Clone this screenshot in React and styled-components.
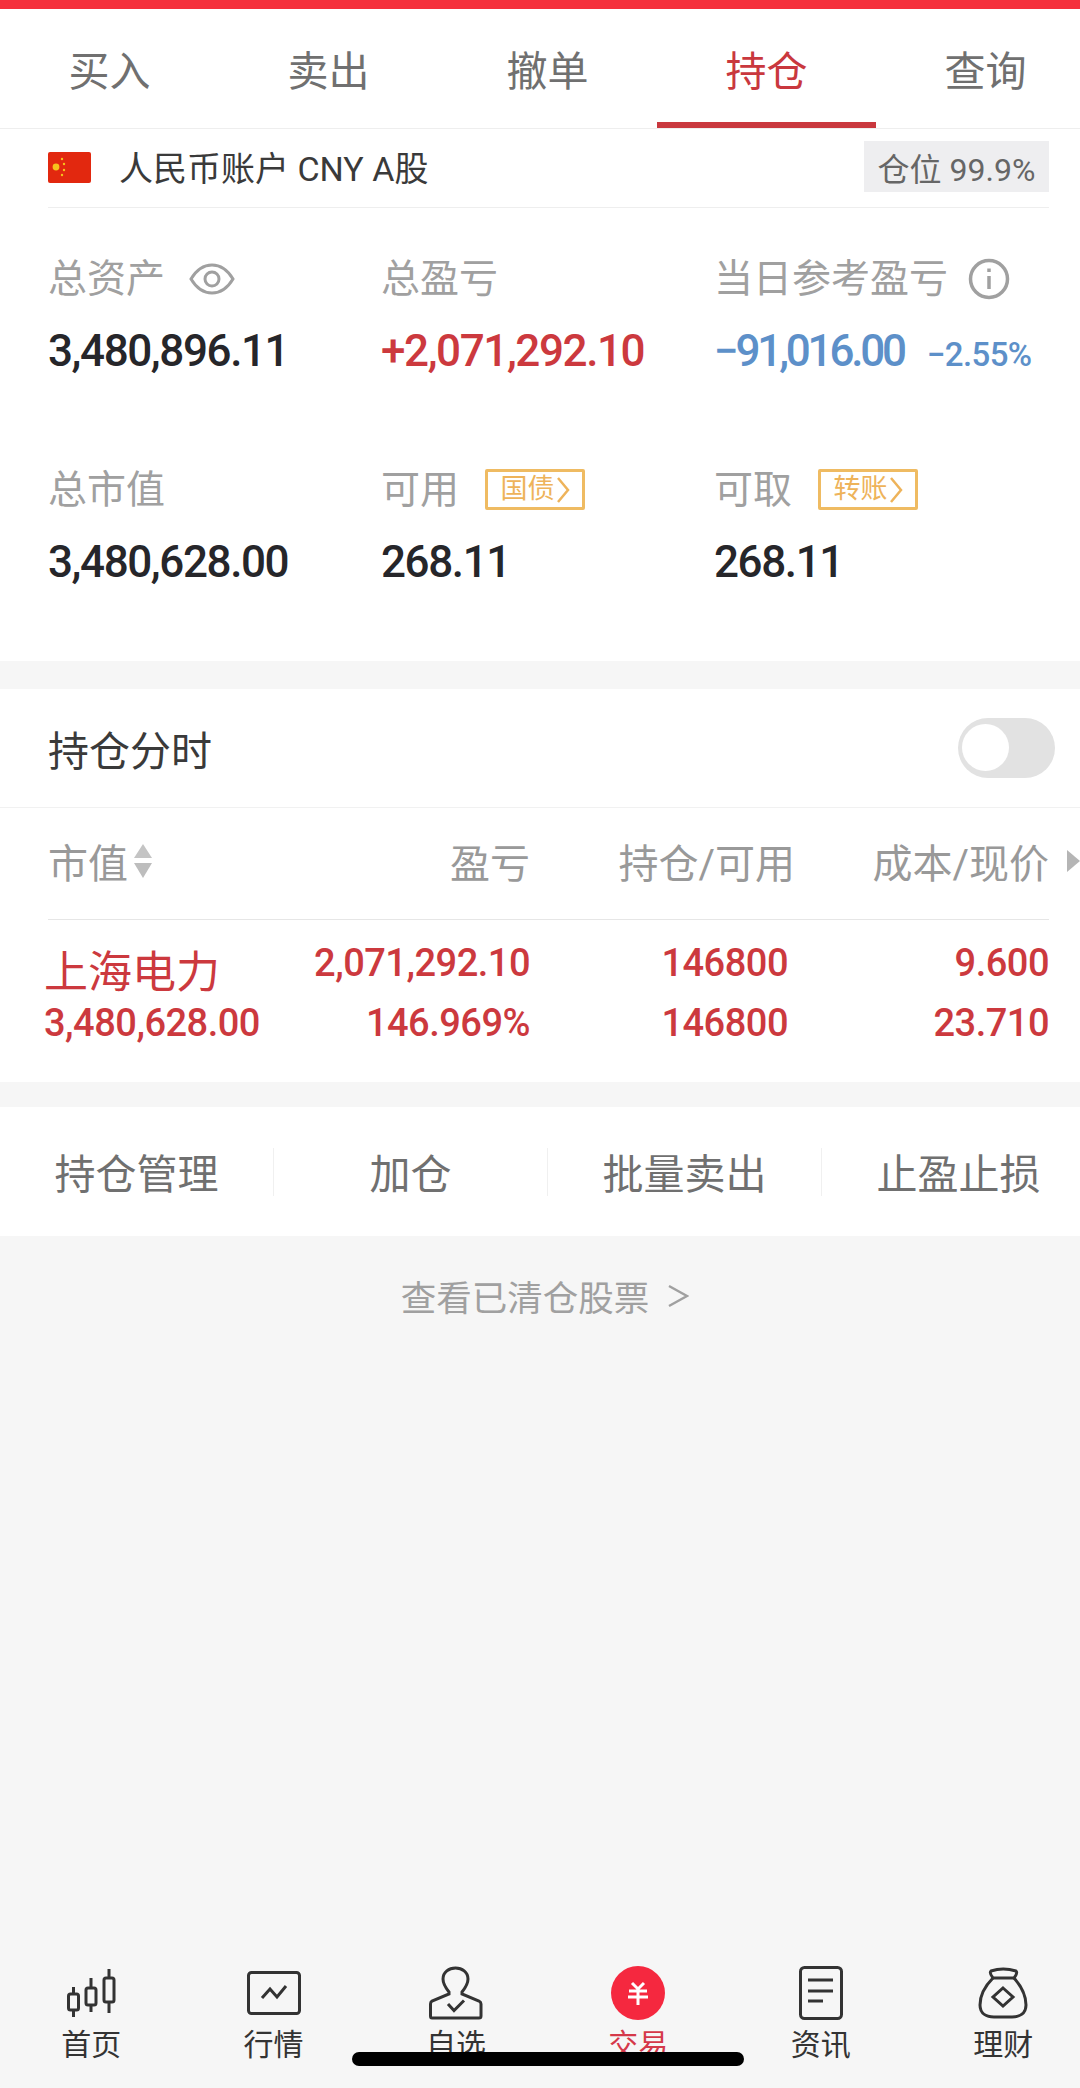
import React from 'react'
import styled, { createGlobalStyle } from 'styled-components'

const GlobalStyle = createGlobalStyle`
  html, body { margin: 0; padding: 0; background: #f6f6f6; }
  * { box-sizing: border-box; }
`

const Page = styled.div`
  position: relative;
  width: 1080px;
  height: 2088px;
  overflow: hidden;
  display: flex;
  flex-direction: column;
  background: #f6f6f6;
  font-family: Roboto, "Noto Sans CJK SC", sans-serif;
  font-weight: 400;
`
const TopBar = styled.div`
  height: 9px;
  background: #f5303c;
`
const Tabs = styled.div`
  display: grid;
  grid-template-columns: repeat(5, 219px);
  background: #fff;
  border-bottom: 1px solid #eeeeee;
  overflow: hidden;
  height: 120px;
`
const Tab = styled.div`
  height: 119px;
  padding-top: 5px;
  display: flex;
  align-items: center;
  justify-content: center;
  font-size: 41px;
  color: ${p => (p.$active ? '#c9383e' : '#707070')};
  border-bottom: 6px solid ${p => (p.$active ? '#c9383e' : 'transparent')};
`
const Account = styled.div`
  background: #fff;
  padding: 0 31px 0 48px;
`
const AccountInner = styled.div`
  height: 79px;
  display: flex;
  align-items: center;
  border-bottom: 1px solid #eeeeee;
  padding-bottom: 3px;
`
const FlagBox = styled.div`
  display: flex;
  margin-top: 1px;
`
const AccountName = styled.div`
  margin-left: 28px;
  font-size: 34px;
  color: #3a3a3a;
  flex: 1;
`
const Chip = styled.div`
  width: 185px;
  height: 51px;
  display: flex;
  align-items: center;
  justify-content: center;
  background: #eeeef0;
  color: #666;
  font-size: 32px;
  white-space: nowrap;
`
const Summary = styled.div`
  background: #fff;
  padding: 47px 0 74px 48px;
  display: grid;
  grid-template-columns: 333px 333px 1fr;
  row-gap: 90px;
`
const Stat = styled.div`
  height: 121px;
`
const StatLabel = styled.div`
  height: 44px;
  display: flex;
  align-items: center;
  font-size: 39px;
  line-height: 44px;
  padding-top: 3px;
  color: #a0a0a0;
`
const StatValue = styled.div`
  margin-top: 27px;
  height: 50px;
  display: flex;
  align-items: baseline;
  font-size: 44px;
  line-height: 50px;
  font-weight: 500;
  letter-spacing: ${p => (p.$tight ? '-3.2px' : '-1.4px')};
  color: ${p => p.$color || '#26262a'};
  white-space: nowrap;
`
const StatSub = styled.span`
  margin-left: 23px;
  font-size: 33px;
  letter-spacing: -0.6px;
`
const Badge = styled.div`
  margin-left: 26px;
  width: 100px;
  height: 41px;
  display: flex;
  align-items: center;
  justify-content: center;
  border: 3px solid #efbb62;
  border-radius: 2px;
  color: #eeb35a;
  font-size: 27px;
  line-height: 1;
`
const Gap = styled.div`
  height: ${p => p.$h}px;
`
const SwitchRow = styled.div`
  height: 119px;
  background: #fff;
  border-bottom: 1px solid #f1f1f1;
  padding: 0 25px 0 48px;
  display: flex;
  align-items: center;
  justify-content: space-between;
  font-size: 41px;
  color: #3a3a3a;
`
const Toggle = styled.div`
  width: 97px;
  height: 60px;
  padding: 6px 4px;
  border-radius: 30px;
  background: #e2e2e2;
`
const Knob = styled.div`
  width: 47px;
  height: 47px;
  border-radius: 50%;
  background: #fff;
`
const HeadWrap = styled.div`
  position: relative;
  background: #fff;
  padding: 0 31px 0 48px;
`
const HeadRow = styled.div`
  height: 112px;
  display: grid;
  grid-template-columns: 257px 225px 265px 254px;
  align-items: center;
  border-bottom: 1px solid #e6e6e6;
  font-size: 40px;
  color: #999;
  padding-bottom: 6px;
`
const HeadCell = styled.div`
  text-align: right;
  white-space: nowrap;
`
const HeadFirst = styled.div`
  display: flex;
  align-items: center;
`
const MoreArrow = styled.div`
  position: absolute;
  right: 0;
  top: 42px;
  width: 0;
  height: 0;
  border-left: 13px solid #b5b5b5;
  border-top: 11px solid transparent;
  border-bottom: 11px solid transparent;
`
const StockRow = styled.div`
  height: 162px;
  background: #fff;
  padding: 20px 31px 0 44px;
  display: grid;
  grid-template-columns: 261px 225px 258px 261px;
  grid-template-rows: 60px 46px;
  color: #cc393e;
  font-size: 38px;
  font-weight: 500;
  line-height: 46px;
  letter-spacing: -0.5px;
  white-space: nowrap;
`
const StockName = styled.div`
  align-self: center;
  padding-top: 6px;
  font-size: 44px;
  font-weight: 400;
  letter-spacing: 0;
`
const Num = styled.div`
  text-align: ${p => (p.$left ? 'left' : 'right')};
`
const Actions = styled.div`
  height: 129px;
  background: #fff;
  display: grid;
  grid-template-columns: repeat(4, 274px);
  align-items: center;
`
const Action = styled.div`
  height: 48px;
  padding-bottom: 2px;
  display: flex;
  align-items: center;
  justify-content: center;
  font-size: 41px;
  color: #707070;
  border-right: 1px solid ${p => (p.$last ? 'transparent' : '#f0f0f0')};
`
const Cleared = styled.div`
  height: 122px;
  padding: 0 0 3px 10px;
  display: flex;
  align-items: center;
  justify-content: center;
  gap: 18px;
  font-size: 35.5px;
  color: #a0a0a0;
`
const TabBar = styled.div`
  margin-top: auto;
  height: 128px;
  padding-top: 5px;
  display: grid;
  grid-template-columns: repeat(6, 182.4px);
`
const NavItem = styled.div`
  display: flex;
  flex-direction: column;
  align-items: center;
`
const NavIcon = styled.div`
  height: 56px;
  display: flex;
  align-items: center;
  justify-content: center;
`
const NavLabel = styled.div`
  margin-top: 4px;
  font-size: 30px;
  line-height: 40px;
  color: ${p => (p.$active ? '#d5394a' : '#333')};
`
const HomeBar = styled.div`
  position: absolute;
  left: 352px;
  top: 2052px;
  width: 392px;
  height: 14px;
  border-radius: 7px;
  background: #000;
`

const Flag = () => (
  <svg width="43" height="31" viewBox="0 0 43 31">
    <rect width="43" height="31" rx="2" fill="#e2280f" />
    <circle cx="8" cy="15" r="3.4" fill="#f6c21c" />
    <circle cx="14" cy="7" r="1.2" fill="#f6c21c" />
    <circle cx="16" cy="12" r="1.2" fill="#f6c21c" />
    <circle cx="16" cy="18" r="1.2" fill="#f6c21c" />
    <circle cx="14" cy="23" r="1.2" fill="#f6c21c" />
  </svg>
)

const EyeIcon = () => (
  <svg width="46" height="32" viewBox="0 0 46 32" fill="none" stroke="#a0a0a0" strokeWidth="3" style={{ marginLeft: 24 }}>
    <path d="M2 16 C8 6 15 2 23 2 C31 2 38 6 44 16 C38 26 31 30 23 30 C15 30 8 26 2 16 Z" />
    <circle cx="23" cy="16" r="7" />
  </svg>
)

const InfoIcon = () => (
  <svg width="42" height="42" viewBox="0 0 42 42" fill="none" stroke="#a0a0a0" strokeWidth="3.5" style={{ marginLeft: 20 }}>
    <circle cx="21" cy="21" r="18.5" />
    <path d="M21 18 L21 31" />
    <path d="M21 10.5 L21 14" />
  </svg>
)

const SortIcon = () => (
  <svg width="20" height="36" viewBox="0 0 20 36" fill="#c4c4c4" style={{ marginLeft: 5 }}>
    <path d="M10 1 L19 15 L1 15 Z" />
    <path d="M10 35 L19 20 L1 20 Z" fill="#bdbdbd" />
  </svg>
)

const BadgeArrow = () => (
  <svg width="14" height="26" viewBox="0 0 14 26" fill="none" stroke="#eeb35a" strokeWidth="2.5" style={{ marginLeft: 1 }}>
    <path d="M2 1 L12 13 L2 25" />
  </svg>
)

const ClearedArrow = () => (
  <svg width="22" height="24" viewBox="0 0 22 24" fill="none" stroke="#a0a0a0" strokeWidth="2.5">
    <path d="M2 2 L20 12 L2 22" />
  </svg>
)

const stroke = { fill: 'none', stroke: '#333', strokeWidth: 3 }

const CandleIcon = () => (
  <svg width="49" height="48" viewBox="0 0 49 48" {...stroke}>
    <rect x="1.5" y="25" width="10" height="16" rx="2" />
    <path d="M6.5 18 V25 M6.5 41 V48" />
    <rect x="19" y="19" width="10" height="17" rx="2" />
    <path d="M24 9 V19 M24 36 V43" />
    <rect x="37" y="9" width="10" height="24" rx="2" />
    <path d="M42 0 V9 M42 33 V44" />
  </svg>
)

const ChartIcon = () => (
  <svg width="54" height="44" viewBox="0 0 54 44" {...stroke}>
    <rect x="1.5" y="1.5" width="51" height="41" rx="3" />
    <path d="M15 27 L23 18 L30 26 L39 15" />
  </svg>
)

const PersonIcon = () => (
  <svg width="54" height="54" viewBox="0 0 54 54" {...stroke}>
    <path d="M20 26 C16 21 14 17 14 13 C14 6 20 2 26.5 2 C33 2 39 6 39 13 C39 17 37 21 33 26 L33 28 L50 35 Q52 36 52 38 L52 50 Q52 52 50 52 L3 52 Q1.5 52 1.5 50 L1.5 38 Q1.5 36 3 35 L20 28 Z" />
    <path d="M19 38 L25 44.5 L35 34.5" />
  </svg>
)

const TradeIcon = () => (
  <svg width="54" height="54" viewBox="0 0 54 54">
    <circle cx="27" cy="27" r="27" fill="#f5283f" />
    <path d="M21 17 L27 23 L33 17 M18 25 H36 M17 31 H37 M27 23 V39" fill="none" stroke="#fff" strokeWidth="3" />
  </svg>
)

const DocIcon = () => (
  <svg width="44" height="54" viewBox="0 0 44 54" {...stroke}>
    <rect x="1.5" y="1.5" width="41" height="51" rx="4" />
    <path d="M9 14 H34 M9 25 H34 M9 35 H24" />
  </svg>
)

const BagIcon = () => (
  <svg width="50" height="52" viewBox="0 0 50 52" {...stroke}>
    <path d="M13 4 Q25 0 38 4 Q40 6 36 11 L15 11 Q11 6 13 4 Z" />
    <path d="M15 11 C6 20 2 30 2 38 C2 47 9 50 16 50 L34 50 C41 50 48 47 48 38 C48 30 44 20 36 11" />
    <path d="M25 21 L35 30 L25 39 L15 30 Z" />
  </svg>
)

const tabs = ['买入', '卖出', '撤单', '持仓', '查询']
const actions = ['持仓管理', '加仓', '批量卖出', '止盈止损']
const nav = [
  { label: '首页', icon: <CandleIcon /> },
  { label: '行情', icon: <ChartIcon /> },
  { label: '自选', icon: <PersonIcon /> },
  { label: '交易', icon: <TradeIcon />, active: true },
  { label: '资讯', icon: <DocIcon /> },
  { label: '理财', icon: <BagIcon /> },
]

export default function App() {
  return (
    <Page>
      <GlobalStyle />
      <TopBar />
      <Tabs>
        {tabs.map(t => (
          <Tab key={t} $active={t === '持仓'}>{t}</Tab>
        ))}
      </Tabs>
      <Account>
        <AccountInner>
          <FlagBox><Flag /></FlagBox>
          <AccountName>人民币账户 CNY A股</AccountName>
          <Chip>仓位 99.9%</Chip>
        </AccountInner>
      </Account>
      <Summary>
        <Stat>
          <StatLabel>总资产<EyeIcon /></StatLabel>
          <StatValue>3,480,896.11</StatValue>
        </Stat>
        <Stat>
          <StatLabel>总盈亏</StatLabel>
          <StatValue $color="#cc393e">+2,071,292.10</StatValue>
        </Stat>
        <Stat>
          <StatLabel>当日参考盈亏<InfoIcon /></StatLabel>
          <StatValue $color="#5d90c9" $tight>−91,016.00<StatSub>−2.55%</StatSub></StatValue>
        </Stat>
        <Stat>
          <StatLabel>总市值</StatLabel>
          <StatValue>3,480,628.00</StatValue>
        </Stat>
        <Stat>
          <StatLabel>可用<Badge>国债<BadgeArrow /></Badge></StatLabel>
          <StatValue>268.11</StatValue>
        </Stat>
        <Stat>
          <StatLabel>可取<Badge>转账<BadgeArrow /></Badge></StatLabel>
          <StatValue>268.11</StatValue>
        </Stat>
      </Summary>
      <Gap $h={28} />
      <SwitchRow>
        持仓分时
        <Toggle><Knob /></Toggle>
      </SwitchRow>
      <HeadWrap>
        <HeadRow>
          <HeadFirst>市值<SortIcon /></HeadFirst>
          <HeadCell>盈亏</HeadCell>
          <HeadCell>持仓/可用</HeadCell>
          <HeadCell>成本/现价</HeadCell>
        </HeadRow>
        <MoreArrow />
      </HeadWrap>
      <StockRow>
        <StockName>上海电力</StockName>
        <Num>2,071,292.10</Num>
        <Num>146800</Num>
        <Num>9.600</Num>
        <Num $left>3,480,628.00</Num>
        <Num>146.969%</Num>
        <Num>146800</Num>
        <Num>23.710</Num>
      </StockRow>
      <Gap $h={25} />
      <Actions>
        {actions.map((a, i) => (
          <Action key={a} $last={i === actions.length - 1}>{a}</Action>
        ))}
      </Actions>
      <Cleared>查看已清仓股票<ClearedArrow /></Cleared>
      <TabBar>
        {nav.map(n => (
          <NavItem key={n.label}>
            <NavIcon>{n.icon}</NavIcon>
            <NavLabel $active={n.active}>{n.label}</NavLabel>
          </NavItem>
        ))}
      </TabBar>
      <HomeBar />
    </Page>
  )
}
